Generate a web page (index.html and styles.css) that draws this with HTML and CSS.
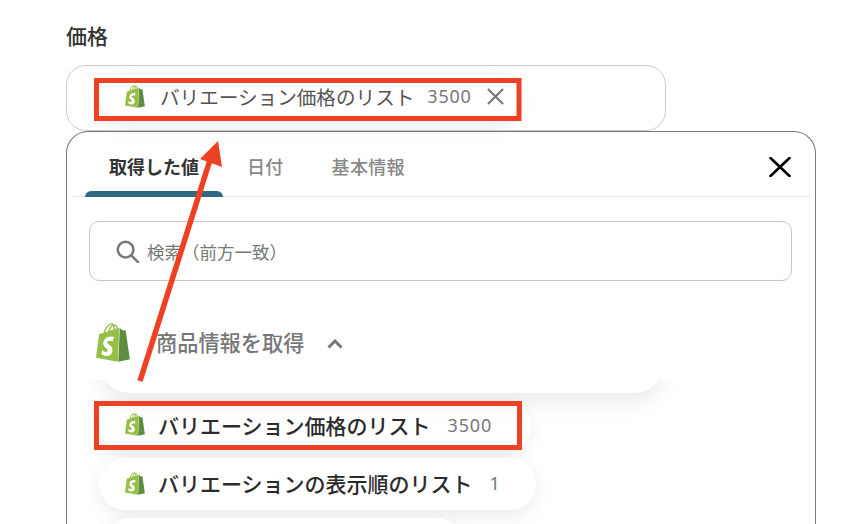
FILE: index.html
```html
<!DOCTYPE html>
<html lang="ja">
<head>
  <meta charset="UTF-8">
  <meta name="viewport" content="width=device-width, initial-scale=1.0">
  <title>価格</title>
  <link rel="stylesheet" href="styles.css">
</head>
<body>
  <svg class="defs" width="0" height="0">
    <symbol id="shopify" viewBox="1.4 0 21.2 24">
      <path fill="#95bf47" fill-rule="evenodd" d="M11.71 11.305s-.81-.424-1.774-.424c-1.447 0-1.504.906-1.504 1.141 0 1.232 3.24 1.715 3.24 4.629 0 2.295-1.44 3.76-3.406 3.76-2.354 0-3.54-1.465-3.54-1.465l.646-2.086s1.245 1.066 2.28 1.066c.675 0 .975-.545.975-.932 0-1.619-2.654-1.694-2.654-4.359-.034-2.237 1.571-4.416 4.827-4.416 1.257 0 1.875.361 1.875.361l-.945 2.715-.02.01zM11.17.83c.136 0 .271.038.405.135-.984.465-2.064 1.639-2.508 3.992-.656.213-1.293.405-1.889.578C7.697 3.75 8.951.84 11.17.84V.83zm1.235 2.949v.135c-.754.232-1.583.484-2.394.736.466-1.777 1.333-2.645 2.085-2.971.193.501.309 1.176.309 2.1zm.539-2.234c.694.074 1.141.867 1.429 1.755-.349.114-.735.231-1.158.366v-.252c0-.752-.096-1.371-.271-1.871v.002zm2.992 1.289c-.02 0-.06.021-.078.021s-.289.075-.714.21c-.423-1.233-1.176-2.37-2.508-2.37h-.115C12.135.209 11.669 0 11.265 0 8.159 0 6.675 3.877 6.21 5.846c-1.194.365-2.063.636-2.16.674-.675.213-.694.232-.772.87-.075.462-1.83 14.063-1.83 14.063L15.009 24l.927-21.166z"/>
      <path fill="#5e8e3e" d="M15.337 23.979l7.216-1.561s-2.604-17.613-2.625-17.73c-.018-.116-.114-.192-.211-.192s-1.929-.136-1.929-.136-1.275-1.274-1.439-1.411c-.045-.037-.075-.057-.121-.074l-.914 21.104h.023z"/>
    </symbol>
  </svg>

  <main class="page">
    <h2 class="field-label">価格</h2>

    <div class="field">
      <div class="chip chip-selected">
        <svg class="logo-small"><use href="#shopify"/></svg>
        <span class="chip-name">バリエーション価格のリスト</span>
        <span class="chip-value">3500</span>
        <svg class="chip-remove" viewBox="0 0 18 18"><path d="M1 1l16 16M17 1L1 17"/></svg>
      </div>
    </div>

    <section class="panel">
      <div class="tabs">
        <div class="tab active">取得した値</div>
        <div class="tab">日付</div>
        <div class="tab">基本情報</div>
        <svg class="panel-close" viewBox="0 0 22 20"><path d="M1.5 1l19 18M20.5 1L1.5 19"/></svg>
      </div>

      <div class="search">
        <svg class="search-icon" viewBox="0 0 24 24"><circle cx="10" cy="10" r="8.2"/><path d="M16 16l7 7"/></svg>
        <span>検索（前方一致）</span>
      </div>

      <div class="group">
        <div class="group-head">
          <svg class="logo-large"><use href="#shopify"/></svg>
          <span class="group-title">商品情報を取得</span>
          <svg class="chevron" viewBox="0 0 16 10"><path d="M1.5 8.5L8 2l6.5 6.5"/></svg>
        </div>
        <div class="chip-list">
          <div class="chip item item-first">
            <svg class="logo-small"><use href="#shopify"/></svg>
            <span class="item-name">バリエーション価格のリスト</span>
            <span class="chip-value">3500</span>
          </div>
          <div class="chip item item-second">
            <svg class="logo-small"><use href="#shopify"/></svg>
            <span class="item-name">バリエーションの表示順のリスト</span>
            <span class="chip-value">1</span>
          </div>
          <div class="chip item item-third"></div>
        </div>
      </div>
    </section>
  </main>

  <svg class="notes" viewBox="0 0 866 524">
    <rect x="96.5" y="80.5" width="422.5" height="38"/>
    <rect x="96.5" y="403.5" width="423" height="44"/>
    <path class="arrow-line" d="M140 381L210 160"/>
    <path class="arrow-head" d="M218 141L200 159L222 167Z"/>
  </svg>
</body>
</html>
```

FILE: styles.css
```css
html, body {
  margin: 0;
  height: 524px;
  overflow: hidden;
  background-color: #fff;
}
body {
  position: relative;
  font-family: "Noto Sans CJK JP", "Noto Sans", sans-serif;
  color: #333;
}
.defs {
  position: absolute;
}
.page {
  width: 750px;
  margin-left: 66px;
}
.field-label {
  margin: 0;
  height: 65px;
  padding-top: 20px;
  box-sizing: border-box;
  font-size: 21px;
  line-height: 30px;
  font-weight: 500;
}
.field {
  box-sizing: border-box;
  width: 600px;
  height: 66px;
  padding: 9px 0 0 34px;
  border: 1px solid #ccc;
  border-radius: 20px;
}
.chip {
  display: flex;
  align-items: center;
  background-color: #fff;
  box-shadow: 0 6px 20px rgba(0, 0, 0, 0.08);
}
.chip-selected {
  box-sizing: border-box;
  width: 418px;
  height: 46px;
  padding: 0 10px 4px 24px;
  border-radius: 23px;
}
.logo-small {
  flex: none;
  width: 20px;
  height: 23px;
}
.chip-name {
  margin-left: 15px;
  font-size: 19.6px;
  color: #555;
}
.chip-value {
  margin-left: 13px;
  font-family: "Noto Sans", sans-serif;
  font-size: 18px;
  letter-spacing: 0.8px;
  color: #777;
}
.chip-remove {
  width: 17px;
  height: 17px;
  margin-left: 15px;
  fill: none;
  stroke: #777;
  stroke-width: 2.2;
}
.panel {
  box-sizing: border-box;
  height: 393px;
  padding: 0 5px;
  border: 1px solid #777;
  border-bottom: none;
  border-radius: 22px 22px 0 0;
  overflow: hidden;
}
.tabs {
  display: flex;
  align-items: flex-end;
  height: 64px;
  padding-left: 13px;
  border-bottom: 1px solid #e3e3e3;
}
.tab {
  position: relative;
  height: 52px;
  padding: 0 24px;
  box-sizing: border-box;
  font-size: 18px;
  line-height: 44px;
  font-weight: 500;
  letter-spacing: 0.3px;
  color: #888;
}
.tab.active {
  font-weight: 700;
  letter-spacing: 0;
  color: #333;
}
.tab.active::after {
  content: "";
  position: absolute;
  left: 0;
  right: 0;
  bottom: -1px;
  height: 6px;
  background-color: #2f6a82;
  border-radius: 8px 8px 0 0;
}
.panel-close {
  width: 22px;
  height: 20px;
  margin: 0 19px 19px auto;
  fill: none;
  stroke: #000;
  stroke-width: 2.6;
  stroke-linecap: round;
}
.search {
  display: flex;
  align-items: center;
  box-sizing: border-box;
  height: 60px;
  margin: 24px 18px 0 17px;
  padding-left: 26px;
  border: 1px solid #c8c8c8;
  border-radius: 10px;
  font-size: 17.5px;
  color: #777;
}
.search-icon {
  width: 23px;
  height: 23px;
  margin-right: 8px;
  fill: none;
  stroke: #777;
  stroke-width: 2.6;
  stroke-linecap: round;
}
.group {
  margin-top: 41px;
  margin-left: 24px;
}
.group-head {
  position: relative;
  z-index: 0;
  display: flex;
  align-items: center;
  box-sizing: border-box;
  height: 71px;
  width: 567px;
  padding-bottom: 30px;
}
/* only the bottom of the white block shows, the top is cut off straight */
.group-head::before {
  content: "";
  position: absolute;
  z-index: -1;
  top: 0;
  right: 0;
  bottom: 0;
  left: 5px;
  border-radius: 0 0 28px 28px;
  background-color: #fff;
  box-shadow: 0 10px 22px rgba(0, 0, 0, 0.08);
  clip-path: inset(58px -40px -40px -40px);
}
.logo-large {
  flex: none;
  width: 34px;
  height: 39px;
}
.group-title {
  margin: 0 0 3px 26px;
  font-size: 21.2px;
  font-weight: 500;
  color: #777;
}
.chevron {
  width: 16px;
  height: 10px;
  margin-left: 23px;
  margin-top: 3px;
  fill: none;
  stroke: #777;
  stroke-width: 3;
}
.chip-list {
  display: flex;
  flex-direction: column;
  align-items: flex-start;
  gap: 8px;
  margin-top: 8px;
}
.item {
  box-sizing: border-box;
  height: 52px;
  padding: 0 26px 2px;
  border-radius: 26px;
  margin-left: 3px;
}
.item-first {
  width: 432px;
  height: 49px;
}
.item-second {
  width: 437px;
}
.item-third {
  width: 358px;
  margin-left: 9px;
}
.item-name {
  margin-left: 13px;
  font-size: 21px;
  font-weight: 500;
  color: #2b2b2b;
}
.item .chip-value {
  margin-left: 17px;
}
.notes {
  position: absolute;
  left: 0;
  top: 0;
  width: 866px;
  height: 524px;
}
.notes rect {
  fill: none;
  stroke: #ee4023;
  stroke-width: 5;
}
.arrow-line {
  fill: none;
  stroke: #ee4023;
  stroke-width: 5.5;
}
.arrow-head {
  fill: #ee4023;
}
```
